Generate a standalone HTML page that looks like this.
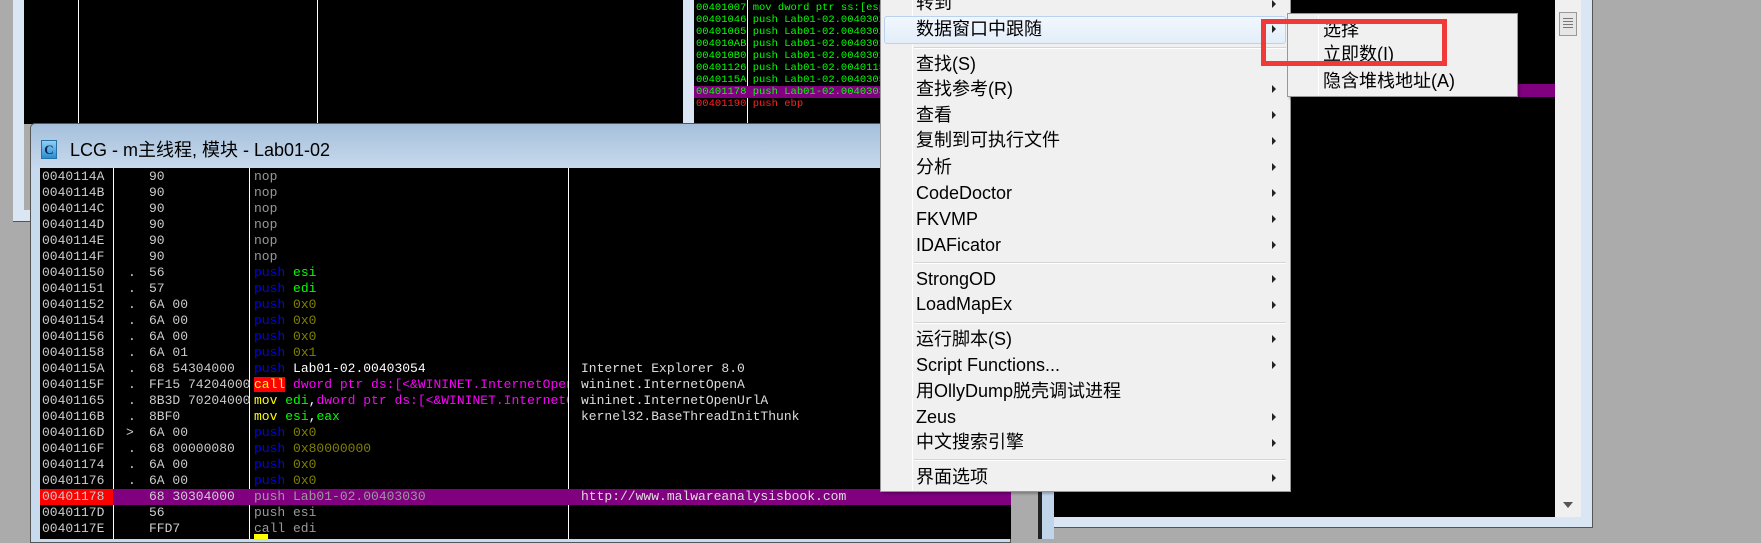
<!DOCTYPE html>
<html><head><meta charset="utf-8"><style>
*{margin:0;padding:0;box-sizing:border-box}
body{width:1761px;height:539px;background:#ababab;position:relative;overflow:hidden;font-family:"Liberation Sans","Noto Sans CJK SC",sans-serif}
.abs{position:absolute}
.mono{font-family:"Liberation Mono","Noto Sans CJK SC",monospace}
.row{position:absolute;left:0;height:16px;line-height:16px;font-size:13px;white-space:nowrap}
.mi{position:absolute;left:916px;font-size:18px;color:#000;line-height:24px;white-space:nowrap}
.ar{position:absolute;left:1272px;width:0;height:0;border-left:4px solid #222;border-top:4px solid transparent;border-bottom:4px solid transparent}
.sep{position:absolute;left:914px;width:372px;height:2px;border-top:1px solid #d4d4d4;border-bottom:1px solid #fff}
.sm{position:relative;display:block;font-family:"Liberation Mono",monospace;font-size:10.5px;line-height:12px;white-space:nowrap;height:12px}
</style></head><body>

<div class="abs" style="left:13px;top:0;width:11px;height:222px;background:#dae6f3"></div>
<div class="abs" style="left:24px;top:0;width:659px;height:124px;background:#000"></div>
<div class="abs" style="left:78px;top:0;width:1px;height:124px;background:#fff"></div>
<div class="abs" style="left:317px;top:0;width:1px;height:124px;background:#fff"></div>
<div class="abs" style="left:13px;top:210px;width:18px;height:12px;background:#dae6f3;border-bottom:1px solid #555"></div>

<div class="abs" style="left:683px;top:0;width:11px;height:130px;background:#dae6f3"></div>
<div class="abs" style="left:694px;top:0;width:186px;height:123px;background:#000"></div>
<div class="abs" style="left:747px;top:0;width:1px;height:123px;background:#fff"></div>
<div class="abs" style="left:694px;top:86px;width:186px;height:12px;background:#800080"></div>
<div class="abs" style="left:696px;top:2px;width:184px;overflow:hidden;color:#00ff00">
<div class="sm">00401007 mov dword ptr ss:[esp]</div>
<div class="sm">00401046 push Lab01-02.00403028</div>
<div class="sm">00401065 push Lab01-02.00403028</div>
<div class="sm">004010AB push Lab01-02.00403010</div>
<div class="sm">004010B0 push Lab01-02.00403010</div>
<div class="sm">00401126 push Lab01-02.00401150</div>
<div class="sm">0040115A push Lab01-02.00403054</div>
<div class="sm">00401178 push Lab01-02.00403030</div>
<div class="sm" style="color:#ff2020">00401190 push ebp</div>
</div>
<div class="abs" style="left:694px;top:123px;width:186px;height:8px;background:#dae6f3"></div>

<div class="abs" style="left:1038px;top:0;width:555px;height:528px;background:#dae6f3;border-right:1px solid #555;border-bottom:1px solid #555"></div>
<div class="abs" style="left:1038px;top:0;width:4px;height:539px;background:#222"></div>
<div class="abs" style="left:1042px;top:0;width:12px;height:539px;background:#c0d4ea"></div>
<div class="abs" style="left:1054px;top:0;width:501px;height:517px;background:#000"></div>
<div class="abs" style="left:1054px;top:84px;width:501px;height:13px;background:#800080"></div>
<div class="abs" style="left:1555px;top:0;width:26px;height:517px;background:#f0f0f0"></div>
<div class="abs" style="left:1559px;top:12px;width:18px;height:24px;background:#e6e6e6;border:1px solid #999"></div>
<div class="abs" style="left:1563px;top:18px;width:10px;height:1px;background:#777;box-shadow:0 3px #777,0 6px #777,0 9px #777"></div>
<div class="abs" style="left:1563px;top:502px;width:0;height:0;border-top:6px solid #555;border-left:5px solid transparent;border-right:5px solid transparent"></div>

<div class="abs" style="left:30px;top:123px;width:981px;height:420px;background:linear-gradient(#a5bfdb,#c8daed 45px,#c8daed);border:1px solid #555;border-radius:5px 5px 0 0"></div>
<div class="abs" style="left:41px;top:140px;width:16px;height:19px;background:linear-gradient(#8fd0f5,#2a8cd0);border:1px solid #2670a8;color:#0d2a50;font:bold 13px 'Liberation Serif',serif;text-align:center;line-height:18px">C</div>
<div class="abs" style="left:70px;top:136px;font-size:18px;color:#000;white-space:nowrap">LCG - m主线程, 模块 - Lab01-02</div>
<div class="abs mono" style="left:40px;top:168px;width:971px;height:371px;background:#000;overflow:hidden">
 <div class="abs" style="left:73px;top:0;width:1px;height:371px;background:#fff"></div>
 <div class="abs" style="left:209px;top:0;width:1px;height:371px;background:#fff"></div>
 <div class="abs" style="left:528px;top:0;width:1px;height:371px;background:#fff"></div>
 <div class="abs" style="left:0;top:321px;width:971px;height:16px;background:#800080"></div>
 <div class="abs" style="left:0;top:321px;width:73px;height:16px;background:#ff0000"></div>
 <div class="abs" style="left:0;top:1px;width:971px">
 <div class="row" style="top:0"><span style="color:#ccc;position:absolute;left:2px">0040114A</span><span style="color:#ccc;position:absolute;left:109px">90</span><span style="color:#999;position:absolute;left:214px">nop</span></div>
 <div class="row" style="top:16px"><span style="color:#ccc;position:absolute;left:2px">0040114B</span><span style="color:#ccc;position:absolute;left:109px">90</span><span style="color:#999;position:absolute;left:214px">nop</span></div>
 <div class="row" style="top:32px"><span style="color:#ccc;position:absolute;left:2px">0040114C</span><span style="color:#ccc;position:absolute;left:109px">90</span><span style="color:#999;position:absolute;left:214px">nop</span></div>
 <div class="row" style="top:48px"><span style="color:#ccc;position:absolute;left:2px">0040114D</span><span style="color:#ccc;position:absolute;left:109px">90</span><span style="color:#999;position:absolute;left:214px">nop</span></div>
 <div class="row" style="top:64px"><span style="color:#ccc;position:absolute;left:2px">0040114E</span><span style="color:#ccc;position:absolute;left:109px">90</span><span style="color:#999;position:absolute;left:214px">nop</span></div>
 <div class="row" style="top:80px"><span style="color:#ccc;position:absolute;left:2px">0040114F</span><span style="color:#ccc;position:absolute;left:109px">90</span><span style="color:#999;position:absolute;left:214px">nop</span></div>
 <div class="row" style="top:96px"><span style="color:#ccc;position:absolute;left:2px">00401150</span><span style="color:#ccc;position:absolute;left:88px">.</span><span style="color:#ccc;position:absolute;left:109px">56</span><span style="position:absolute;left:214px"><span style="color:#0000ff">push</span> <span style="color:#00ff00">esi</span></span></div>
 <div class="row" style="top:112px"><span style="color:#ccc;position:absolute;left:2px">00401151</span><span style="color:#ccc;position:absolute;left:88px">.</span><span style="color:#ccc;position:absolute;left:109px">57</span><span style="position:absolute;left:214px"><span style="color:#0000ff">push</span> <span style="color:#00ff00">edi</span></span></div>
 <div class="row" style="top:128px"><span style="color:#ccc;position:absolute;left:2px">00401152</span><span style="color:#ccc;position:absolute;left:88px">.</span><span style="color:#ccc;position:absolute;left:109px">6A 00</span><span style="position:absolute;left:214px"><span style="color:#0000ff">push</span> <span style="color:#808000">0x0</span></span></div>
 <div class="row" style="top:144px"><span style="color:#ccc;position:absolute;left:2px">00401154</span><span style="color:#ccc;position:absolute;left:88px">.</span><span style="color:#ccc;position:absolute;left:109px">6A 00</span><span style="position:absolute;left:214px"><span style="color:#0000ff">push</span> <span style="color:#808000">0x0</span></span></div>
 <div class="row" style="top:160px"><span style="color:#ccc;position:absolute;left:2px">00401156</span><span style="color:#ccc;position:absolute;left:88px">.</span><span style="color:#ccc;position:absolute;left:109px">6A 00</span><span style="position:absolute;left:214px"><span style="color:#0000ff">push</span> <span style="color:#808000">0x0</span></span></div>
 <div class="row" style="top:176px"><span style="color:#ccc;position:absolute;left:2px">00401158</span><span style="color:#ccc;position:absolute;left:88px">.</span><span style="color:#ccc;position:absolute;left:109px">6A 01</span><span style="position:absolute;left:214px"><span style="color:#0000ff">push</span> <span style="color:#808000">0x1</span></span></div>
 <div class="row" style="top:192px"><span style="color:#ccc;position:absolute;left:2px">0040115A</span><span style="color:#ccc;position:absolute;left:88px">.</span><span style="color:#ccc;position:absolute;left:109px">68 54304000</span><span style="position:absolute;left:214px"><span style="color:#0000ff">push</span> <span style="color:#fff">Lab01-02.00403054</span></span><span style="color:#ddd;position:absolute;left:541px">Internet Explorer 8.0</span></div>
 <div class="row" style="top:208px"><span style="color:#ccc;position:absolute;left:2px">0040115F</span><span style="color:#ccc;position:absolute;left:88px">.</span><span style="color:#ccc;position:absolute;left:109px">FF15 74204000</span><span style="position:absolute;left:214px;width:314px;overflow:hidden;background:#000"><span style="color:#ffff00;background:#ff0000">call</span> <span style="color:#ff00ff">dword ptr ds:[&lt;&amp;WININET.InternetOpenA&gt;]</span></span><span style="color:#ddd;position:absolute;left:541px">wininet.InternetOpenA</span></div>
 <div class="row" style="top:224px"><span style="color:#ccc;position:absolute;left:2px">00401165</span><span style="color:#ccc;position:absolute;left:88px">.</span><span style="color:#ccc;position:absolute;left:109px">8B3D 70204000</span><span style="position:absolute;left:214px;width:314px;overflow:hidden;background:#000"><span style="color:#ffff00">mov</span> <span style="color:#00ff00">edi</span><span style="color:#fff">,</span><span style="color:#ff00ff">dword ptr ds:[&lt;&amp;WININET.InternetOpenUrlA&gt;]</span></span><span style="color:#ddd;position:absolute;left:541px">wininet.InternetOpenUrlA</span></div>
 <div class="row" style="top:240px"><span style="color:#ccc;position:absolute;left:2px">0040116B</span><span style="color:#ccc;position:absolute;left:88px">.</span><span style="color:#ccc;position:absolute;left:109px">8BF0</span><span style="position:absolute;left:214px"><span style="color:#ffff00">mov</span> <span style="color:#00ff00">esi</span><span style="color:#fff">,</span><span style="color:#00ff00">eax</span></span><span style="color:#ddd;position:absolute;left:541px">kernel32.BaseThreadInitThunk</span></div>
 <div class="row" style="top:256px"><span style="color:#ccc;position:absolute;left:2px">0040116D</span><span style="color:#ccc;position:absolute;left:86px">&gt;</span><span style="color:#ccc;position:absolute;left:109px">6A 00</span><span style="position:absolute;left:214px"><span style="color:#0000ff">push</span> <span style="color:#808000">0x0</span></span></div>
 <div class="row" style="top:272px"><span style="color:#ccc;position:absolute;left:2px">0040116F</span><span style="color:#ccc;position:absolute;left:88px">.</span><span style="color:#ccc;position:absolute;left:109px">68 00000080</span><span style="position:absolute;left:214px"><span style="color:#0000ff">push</span> <span style="color:#808000">0x80000000</span></span></div>
 <div class="row" style="top:288px"><span style="color:#ccc;position:absolute;left:2px">00401174</span><span style="color:#ccc;position:absolute;left:88px">.</span><span style="color:#ccc;position:absolute;left:109px">6A 00</span><span style="position:absolute;left:214px"><span style="color:#0000ff">push</span> <span style="color:#808000">0x0</span></span></div>
 <div class="row" style="top:304px"><span style="color:#ccc;position:absolute;left:2px">00401176</span><span style="color:#ccc;position:absolute;left:88px">.</span><span style="color:#ccc;position:absolute;left:109px">6A 00</span><span style="position:absolute;left:214px"><span style="color:#0000ff">push</span> <span style="color:#808000">0x0</span></span></div>
 <div class="row" style="top:320px"><span style="color:#ccc;position:absolute;left:2px">00401178</span><span style="color:#ccc;position:absolute;left:109px">68 30304000</span><span style="color:#999;position:absolute;left:214px">push Lab01-02.00403030</span><span style="color:#ddd;position:absolute;left:541px">http://www.malwareanalysisbook.com</span></div>
 <div class="row" style="top:336px"><span style="color:#ccc;position:absolute;left:2px">0040117D</span><span style="color:#ccc;position:absolute;left:109px">56</span><span style="color:#999;position:absolute;left:214px">push esi</span></div>
 <div class="row" style="top:352px"><span style="color:#ccc;position:absolute;left:2px">0040117E</span><span style="color:#ccc;position:absolute;left:109px">FFD7</span><span style="color:#999;position:absolute;left:214px">call edi</span></div>
 </div>
 <div class="abs" style="left:214px;top:366px;width:14px;height:6px;background:#ffff00"></div>
</div>

<div class="abs" style="left:880px;top:0;width:411px;height:492px;background:#f0f0f0;border:1px solid #979797;border-top:none;box-shadow:2px 2px 2px rgba(0,0,0,.25)"></div>
<div class="abs" style="left:912px;top:0;width:1px;height:490px;background:#e2e2e2;border-right:1px solid #fff"></div>
<div class="abs" style="left:884px;top:16px;width:402px;height:28px;background:linear-gradient(#f2f7fd,#e3eefa);border:1px solid #b8d2f0;border-radius:3px"></div>
<div class="mi" style="top:-9px">转到</div><div class="ar" style="top:0px"></div>
<div class="mi" style="top:17px">数据窗口中跟随</div><div class="ar" style="top:25px"></div>
<div class="sep" style="top:47px"></div>
<div class="mi" style="top:52px">查找(S)</div>
<div class="mi" style="top:77px">查找参考(R)</div><div class="ar" style="top:85px"></div>
<div class="mi" style="top:103px">查看</div><div class="ar" style="top:111px"></div>
<div class="mi" style="top:128px">复制到可执行文件</div><div class="ar" style="top:137px"></div>
<div class="mi" style="top:155px">分析</div><div class="ar" style="top:163px"></div>
<div class="mi" style="top:181px">CodeDoctor</div><div class="ar" style="top:189px"></div>
<div class="mi" style="top:207px">FKVMP</div><div class="ar" style="top:215px"></div>
<div class="mi" style="top:233px">IDAFicator</div><div class="ar" style="top:241px"></div>
<div class="sep" style="top:262px"></div>
<div class="mi" style="top:267px">StrongOD</div><div class="ar" style="top:275px"></div>
<div class="mi" style="top:292px">LoadMapEx</div><div class="ar" style="top:301px"></div>
<div class="sep" style="top:322px"></div>
<div class="mi" style="top:327px">运行脚本(S)</div><div class="ar" style="top:335px"></div>
<div class="mi" style="top:353px">Script Functions...</div><div class="ar" style="top:361px"></div>
<div class="mi" style="top:379px">用OllyDump脱壳调试进程</div>
<div class="mi" style="top:405px">Zeus</div><div class="ar" style="top:413px"></div>
<div class="mi" style="top:430px">中文搜索引擎</div><div class="ar" style="top:439px"></div>
<div class="sep" style="top:459px"></div>
<div class="mi" style="top:465px">界面选项</div><div class="ar" style="top:474px"></div>

<div class="abs" style="left:1287px;top:13px;width:231px;height:84px;background:#f0f0f0;border:1px solid #979797;box-shadow:2px 2px 2px rgba(0,0,0,.25)"></div>
<div class="abs" style="left:1318px;top:15px;width:1px;height:80px;background:#e2e2e2;border-right:1px solid #fff"></div>
<div class="mi" style="left:1323px;top:18px">选择</div>
<div class="mi" style="left:1323px;top:42px">立即数(I)</div>
<div class="mi" style="left:1323px;top:69px">隐含堆栈地址(A)</div>
<div class="abs" style="left:1261px;top:19px;width:186px;height:47px;border:5px solid #f03a3a"></div>
</body></html>
